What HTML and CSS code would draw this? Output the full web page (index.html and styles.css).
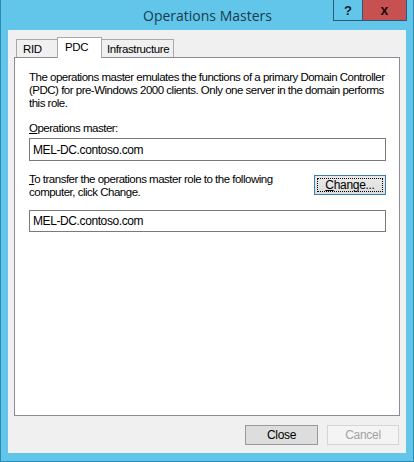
FILE: index.html
```html
<!DOCTYPE html>
<html>
<head>
<meta charset="utf-8">
<link rel="stylesheet" href="styles.css">
</head>
<body>
<div class="window">
  <div class="titlebar">
    <span class="title">Operations Masters</span>
    <div class="caption-buttons">
      <div class="cb help">?</div>
      <div class="cb close">x</div>
    </div>
  </div>
  <div class="client">
    <div class="tabs">
      <div class="tab rid">RID</div>
      <div class="tab sel">PDC</div>
      <div class="tab infra">Infrastructure</div>
    </div>
    <div class="panel">
      <p class="desc">The operations master emulates the functions of a primary Domain Controller<br>(PDC) for pre-Windows 2000 clients. Only one server in the domain performs<br>this role.</p>
      <div class="label"><u>O</u>perations master:</div>
      <div class="field">MEL-DC.contoso.com</div>
      <div class="transfer">
        <div class="label2"><u>T</u>o transfer the operations master role to the following<br>computer, click Change.</div>
        <div class="btn change"><span class="focus"><u>C</u>hange...</span></div>
      </div>
      <div class="field field2">MEL-DC.contoso.com</div>
    </div>
    <div class="buttons">
      <div class="btn dlg def">Close</div>
      <div class="btn dlg dis">Cancel</div>
    </div>
  </div>
</div>
</body>
</html>
```

FILE: styles.css
```css
* { box-sizing: border-box; }
html, body { margin: 0; padding: 0; background: #5fc5e8; }
body { font-family: "Liberation Sans", Arial, sans-serif; font-size: 11.5px; letter-spacing: -0.5px; color: #000; }

.window {
  width: 414px;
  height: 462px;
  background: #61c6e9;
  border: 1px solid #2b8ab3;
  border-top: none;
  padding: 0 7px 8px 7px;
  display: flex;
  flex-direction: column;
  position: relative;
}

.titlebar {
  height: 30px;
  display: flex;
  align-items: center;
  justify-content: center;
  flex: none;
}
.title {
  font-family: "Open Sans", "Liberation Sans", sans-serif;
  font-size: 14px;
  letter-spacing: 0;
  color: #1b3a4d;
  margin-left: 1px;
}

.caption-buttons {
  position: absolute;
  top: 0;
  right: 6px;
  display: flex;
}
.cb {
  height: 21px;
  display: flex;
  align-items: center;
  justify-content: center;
  font-weight: bold;
  font-family: "Liberation Sans", sans-serif;
  letter-spacing: 0;
  border: 1px solid #2d5a72;
  border-top: none;
  color: #10202a;
}
.cb.help { width: 29px; background: #61c6e9; font-size: 13px; border-right: none; }
.cb.close { width: 45px; background: #c75050; font-size: 14px; color: #1a0a0a; }

.client {
  flex: 1;
  background: #f0f0f0;
  padding-top: 7px;
  display: flex;
  flex-direction: column;
}

.tabs {
  height: 20px;
  display: flex;
  align-items: flex-end;
  padding-left: 8px;
  position: relative;
  z-index: 1;
  font-size: 11.5px;
  letter-spacing: -0.4px;
}
.tab {
  height: 18px;
  border: 1px solid #a9a9a9;
  border-bottom: none;
  background: #f0f0f0;
  display: flex;
  align-items: center;
  flex: none;
}
.tab.rid { width: 42px; padding-left: 6px; margin-right: -1px; }
.tab.sel {
  width: 45px;
  height: 21px;
  margin-bottom: -1px;
  background: #fff;
  padding: 0 0 2px 7px;
  position: relative;
  z-index: 2;
}
.tab.infra { width: 73px; padding-left: 5px; margin-left: -1px; }

.panel {
  margin: 0 6px;
  height: 359px;
  background: #fff;
  border: 1px solid #898c95;
  padding: 13px 13px 0 14px;
  flex: none;
}

.desc {
  margin: 0;
  line-height: 13px;
  white-space: nowrap;
}
.label {
  margin-top: 12px;
  line-height: 13px;
}
.field {
  margin-top: 3px;
  height: 23px;
  border: 1px solid #7a7a7a;
  padding: 0 0 0 3px;
  display: flex;
  align-items: center;
  font-size: 12px;
  letter-spacing: -0.4px;
}
.transfer {
  margin-top: 12px;
  display: flex;
  justify-content: space-between;
  align-items: flex-start;
}
.label2 {
  line-height: 13px;
  white-space: nowrap;
}
.btn {
  height: 20px;
  display: flex;
  align-items: center;
  justify-content: center;
  border: 1px solid #adadad;
  background: #e1e1e1;
  font-size: 12px;
  letter-spacing: -0.3px;
}
.btn.change {
  width: 72px;
  margin-top: 2px;
  border-color: #3c7fb1;
  background: linear-gradient(#eaeaea, #dcdcdc);
  padding: 2px;
  flex: none;
}
.focus {
  border: 1px dotted #000;
  width: 100%;
  height: 100%;
  display: flex;
  align-items: center;
  justify-content: center;
}
.field2 { margin-top: 11px; height: 22px; }

.buttons {
  display: flex;
  justify-content: flex-end;
  gap: 9px;
  padding-right: 7px;
  margin-top: 9px;
}
.btn.dlg { width: 73px; }
.btn.def { border-color: #9a9a9a; background: #dddddd; }
.btn.dis { width: 72px; background: #f4f4f4; border-color: #d5d5d5; color: #a3a3a3; }
```
